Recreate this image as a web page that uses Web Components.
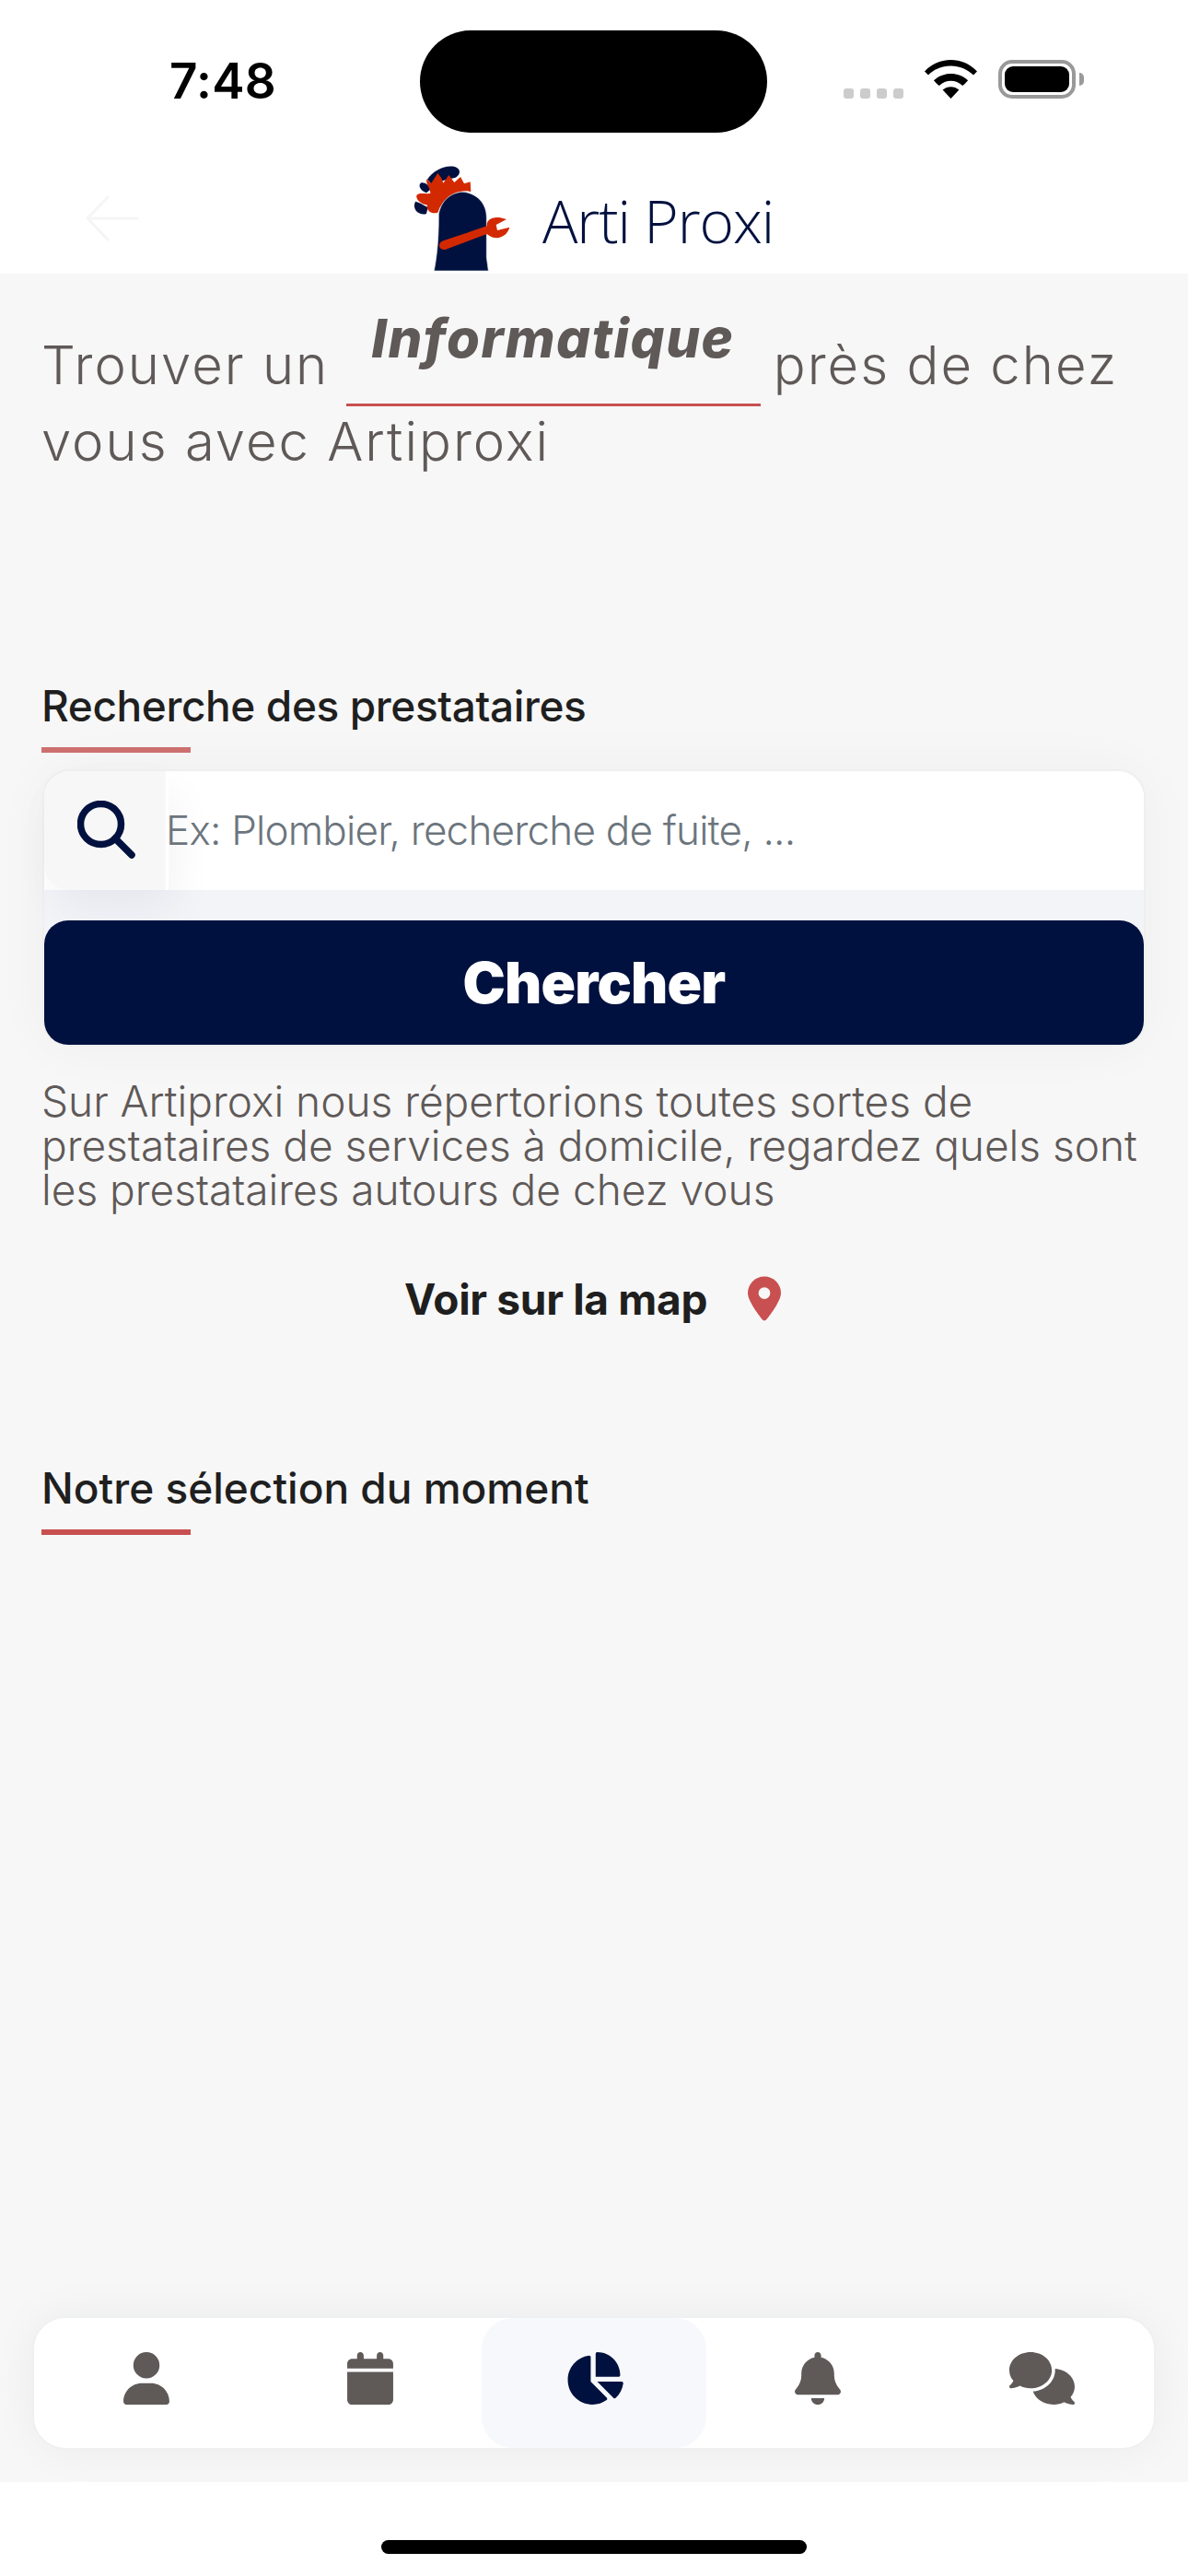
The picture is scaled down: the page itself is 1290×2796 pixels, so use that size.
<!DOCTYPE html>
<html lang="fr"><head><meta charset="utf-8"><title>Arti Proxi</title>
<style>
html,body{margin:0;padding:0;background:#fff}
body{width:1290px;height:2796px;display:flex;flex-direction:column;font-family:Inter,"Liberation Sans",sans-serif;overflow:hidden}
</style></head><body>
<ios-status></ios-status>
<app-header></app-header>
<app-main>
  <hero-title></hero-title>
  <section-title style="margin-top:217px;letter-spacing:-.4px">Recherche des prestataires</section-title>
  <search-card></search-card>
  <intro-text>Sur Artiproxi nous répertorions toutes sortes de<br>prestataires de services à domicile, regardez quels sont<br>les prestataires autours de chez vous</intro-text>
  <map-link></map-link>
  <section-title style="margin-top:147px;letter-spacing:0" solid>Notre sélection du moment</section-title>
  <bottom-nav></bottom-nav>
</app-main>
<home-bar></home-bar>
<script>
function def(name,html){customElements.define(name,class extends HTMLElement{constructor(){super();this.attachShadow({mode:'open'}).innerHTML=html;}});}
def('ios-status',`<style>
:host{display:flex;height:160px;flex:none;background:#fff;padding-left:184px;box-sizing:border-box;align-items:flex-start}
.t{width:272px;margin-top:58px;font:600 53px/60px Inter,"Liberation Sans",sans-serif;color:#000;letter-spacing:.3px}
.i{width:377px;height:111px;margin-top:33px;border-radius:56px;background:#000}
.d{display:flex;gap:7px;margin:96px 0 0 83px}.d i{width:11px;height:11px;border-radius:3px;background:#ccc}
svg.w{margin:65px 0 0 23px}
.b{margin:65px 0 0 23px;width:84px;height:42px;box-sizing:border-box;border:4px solid #999;border-radius:15px;padding:3px}
.b i{display:block;height:100%;border-radius:9px;background:#000}
.n{margin:79px 0 0 4px;width:5px;height:14px;background:#999;border-radius:0 5px 5px 0}
</style><div class="t">7:48</div><div class="i"></div><div class="d"><i></i><i></i><i></i><i></i></div>
<svg class="w" width="57" height="42" viewBox="0 0 57 42"><path d="M28.5 42 19.6 32.6C24.7 28 32.3 28 37.4 32.6ZM13.6 26.3 9.9 22.3C20.4 12.6 36.6 12.6 47.1 22.3L43.4 26.3 41.2 28C33.9 21 23.1 21 15.8 28ZM4 16.5 0 12.4C16-4.100 41-4.100 57 12.400L53 16.5C39.500 3 17.500 3 4 16.500Z" fill="#000"/></svg>
<div class="b"><i></i></div><div class="n"></div>`);
def('app-header',`<style>
:host{display:flex;height:137px;flex:none;background:#fff;box-sizing:border-box;align-items:flex-end;padding-left:92px;position:relative}
.a{align-self:flex-start;margin-top:52px}
.l{margin-left:296px;display:block}
.x{margin-left:29px;font:300 64px/1 "Open Sans",Lato,sans-serif;color:#00113f;align-self:flex-start;margin-top:48px;letter-spacing:-1.1px;white-space:nowrap}
</style>
<svg class="a" width="60" height="50" viewBox="0 0 60 50" fill="none" stroke="#f5f5f5" stroke-width="3" stroke-linecap="round" stroke-linejoin="round"><path d="M25 2 3 25 25 48M3 25H57"/></svg>
<svg class="l" width="112" height="120" viewBox="90 51 336 360">
<path d="M138 104C158 72 208 52 234 66 250 76 242 92 230 98L150 118Z" fill="#00113f"/>
<path d="M116 116C128 110 142 124 152 134L135 148C120 142 106 128 116 116Z" fill="#00113f"/>
<path d="M99 176C112 178 125 188 140 195L135 216C115 224 86 205 99 176Z" fill="#00113f"/>
<path d="M136 103 150 118 172 84 184 100 190 116 208 90 226 114 246 96 258 118 278 112 280 144C240 134 190 160 172 212 150 218 134 205 138 188 120 185 100 172 103 156 112 146 130 152 148 150 148 130 132 120 136 103Z" fill="#d32900"/>
<path d="M160 402C172 340 175 280 175 218 182 172 218 145 255 145 300 150 331 182 331 228L331 358 337 402Z" fill="#00113f" stroke="#e9ecf2" stroke-width="2"/>
<path d="M190 304 332 256C330 235 352 218 396 234L362 252 366 270 406 260C396 294 360 306 332 282L198 332C176 338 168 312 190 304Z" fill="#d32900"/>
</svg>
<div class="x">Arti Proxi</div>`);
def('app-main',`<style>
:host{display:flex;flex-direction:column;flex:1;background:#f7f7f7;padding-left:45px;position:relative;min-height:0}
::slotted(bottom-nav){margin-top:auto}
</style><slot></slot>`);
def('hero-title',`<style>
:host{display:block;width:1240px;font:300 58px/83px Inter,sans-serif;letter-spacing:2px;color:#5f5958;box-sizing:border-box;padding-top:32px;white-space:nowrap}
.f{display:inline-block;overflow:hidden;width:450px;height:112px;box-sizing:border-box;margin:0 -4px -24px 0;border-bottom:3px solid #c85050;text-align:center;font:italic 800 58px/76px Inter,sans-serif;letter-spacing:1.6px;color:#5f5958}
</style>Trouver un <span class="f">Informatique</span> près de chez<br>vous avec Artiproxi`);
customElements.define('section-title',class extends HTMLElement{constructor(){super();this.attachShadow({mode:'open'}).innerHTML=`<style>
:host{display:block;font:500 46px/56px Inter,sans-serif;color:#1f1f1f;letter-spacing:-.4px}
.u{width:162px;height:6px;margin-top:17px;background:#c85050}
:host(:not([solid])) .u{background:#cf7070}
</style><slot></slot><div class="u"></div>`;}});
def('search-card',`<style>
:host{display:block;width:1198px;height:301px;margin:18px 0 0 1px;box-sizing:border-box;border:2px solid #efefef;border-radius:30px;background:#f3f4f8;box-shadow:0 0 60px rgba(0,0,0,.04);}
.r{display:flex;height:129px;background:#fff;border-radius:28px 28px 0 0;position:relative}
.ic{width:132px;flex:none;background:#f7f7f7;border-radius:28px 0 0 28px;display:flex;padding:32px 0 0 36px;box-sizing:border-box;box-shadow:10px 22px 46px rgba(0,17,63,.05);position:relative;z-index:1}
.sep{width:3px;flex:none;background:#fff;position:relative;z-index:1}
.p{font:300 44px/128px Inter,sans-serif;color:#6c757d;position:relative;z-index:1;letter-spacing:-.8px;margin-left:-3px}
button{display:block;position:relative;z-index:2;width:100%;height:135px;margin-top:33px;border:0;border-radius:26px;background:#00113f;color:#fff;font:900 62px/1 Inter,sans-serif;letter-spacing:-.8px;padding:0}
</style><div class="r"><div class="ic"><svg width="63" height="63" viewBox="0 0 63 63" fill="none" stroke="#00113f" stroke-width="7.500" stroke-linecap="round"><circle cx="25.500" cy="25.500" r="22"/><path d="M41 41 59 59"/></svg></div><div class="sep"></div><div class="p">Ex: Plombier, recherche de fuite, ...</div></div><button>Chercher</button>`);
def('intro-text',`<style>
:host{display:block;margin-top:35px;font:300 46px/48px Inter,sans-serif;color:#5f5958;white-space:nowrap;letter-spacing:0}
</style><slot></slot>`);
def('map-link',`<style>
:host{display:flex;align-items:center;margin:65px 0 0 394px;height:60px;font:700 46px/60px Inter,sans-serif;color:#1f1f1f;letter-spacing:-.3px}
svg{margin-left:44px;margin-top:-2px}
</style><span>Voir sur la map</span><svg width="36" height="49" viewBox="0 0 384 512"><path d="M215.700 499.200C267 435 384 279.400 384 192 384 86 298 0 192 0S0 86 0 192C0 279.400 117 435 168.300 499.200 180.600 514.500 203.400 514.500 215.700 499.200Z" fill="#c85050"/><circle cx="192" cy="192" r="68" fill="#f7f7f7"/></svg>`);
def('bottom-nav',`<style>
:host{display:flex;width:1220px;height:145px;box-sizing:border-box;margin:0 0 35px -10px;background:#fff;border:2px solid #eff0f2;border-radius:36px;box-shadow:0 0 50px rgba(0,0,0,.05);flex:none}
div{flex:1;display:flex;align-items:flex-start;justify-content:center;padding-top:37px;box-sizing:border-box;fill:#5f5958}
.on{background:#f7f8fb;border-radius:34px;fill:#00113f}
</style>
<div><svg width="50" height="57" viewBox="0 0 448 512"><path d="M224 256A128 128 0 1 0 224 0a128 128 0 1 0 0 256zm-45.700 48C79.800 304 0 383.800 0 482.300C0 498.700 13.300 512 29.700 512H418.300c16.400 0 29.700-13.300 29.700-29.700C448 383.800 368.200 304 269.700 304H178.300z"/></svg></div>
<div><svg width="50" height="57" viewBox="0 0 448 512"><path d="M96 32V64H48C21.500 64 0 85.500 0 112v48H448V112c0-26.500-21.500-48-48-48H352V32c0-17.700-14.300-32-32-32s-32 14.300-32 32V64H160V32c0-17.700-14.300-32-32-32S96 14.300 96 32zM448 192H0V464c0 26.500 21.500 48 48 48H400c26.500 0 48-21.500 48-48V192z"/></svg></div>
<div class="on"><svg width="64" height="57" viewBox="0 0 576 512"><path d="M304 240V16.600c0-9 7-16.600 16-16.600C443.700 0 544 100.300 544 224c0 9-7.600 16-16.600 16H304zM32 272C32 150.700 122.100 50.300 239 34.300c9.200-1.300 17 6.100 17 15.400V288L412.500 444.500c6.700 6.700 6.200 17.700-1.500 23.100C371.800 495.600 323.800 512 272 512C139.500 512 32 404.600 32 272zm526.400 16c9.300 0 16.600 7.800 15.400 17c-7.700 55.900-34.600 105.600-73.900 142.300c-6 5.600-15.400 5.200-21.200-.7L320 288H558.400z"/></svg></div>
<div><svg width="50" height="57" viewBox="0 0 448 512"><path d="M224 0c-17.700 0-32 14.300-32 32V51.200C119 66 64 130.600 64 208v18.800c0 47-17.300 92.400-48.500 127.600l-7.400 8.300c-8.400 9.400-10.400 22.900-5.300 34.400S19.400 416 32 416H416c12.600 0 24-7.400 29.200-18.900s3.100-25-5.300-34.400l-7.400-8.300C401.300 319.200 384 273.900 384 226.800V208c0-77.400-55-142-128-156.800V32c0-17.700-14.300-32-32-32zm45.300 493.300c12-12 18.700-28.300 18.700-45.300H224 160c0 17 6.700 33.300 18.700 45.300s28.300 18.700 45.300 18.700s33.300-6.700 45.300-18.700z"/></svg></div>
<div><svg width="71" height="57" viewBox="0 0 640 512"><path d="M208 352c114.900 0 208-78.800 208-176S322.900 0 208 0S0 78.800 0 176c0 38.600 14.700 74.300 39.600 103.400c-3.500 9.400-8.700 17.700-14.200 24.700c-4.800 6.200-9.700 11-13.300 14.300c-1.800 1.600-3.300 2.900-4.300 3.700c-.5 .4-.9 .7-1.100 .8l-.2 .2 0 0 0 0C1 327.200-1.400 334.400 .8 340.900S9.100 352 16 352c21.800 0 43.800-5.600 62.100-12.500c9.200-3.500 17.800-7.400 25.300-11.400C134.100 343.300 169.800 352 208 352zM448 176c0 112.300-99.100 196.900-216.500 207C255.800 457.400 336.400 512 432 512c38.200 0 73.900-8.700 104.700-23.900c7.500 4 16 7.900 25.200 11.400c18.300 6.900 40.300 12.500 62.100 12.500c6.900 0 13.100-4.500 15.200-11.100c2.100-6.600-.2-13.800-5.800-17.900l0 0 0 0-.2-.2c-.2-.2-.6-.4-1.100-.8c-1-.8-2.500-2-4.300-3.700c-3.600-3.300-8.500-8.100-13.300-14.300c-5.500-7-10.700-15.400-14.200-24.700c24.900-29 39.600-64.700 39.600-103.400c0-92.800-84.900-168.900-192.600-175.500c.4 5.100 .6 10.300 .6 15.500z"/></svg></div>`);
def('home-bar',`<style>
:host{display:flex;justify-content:center;height:102px;flex:none;background:#fff;padding-top:63px;box-sizing:border-box}
i{display:block;width:462px;height:15px;border-radius:8px;background:#000}
</style><i></i>`);
</script>
</body></html>
